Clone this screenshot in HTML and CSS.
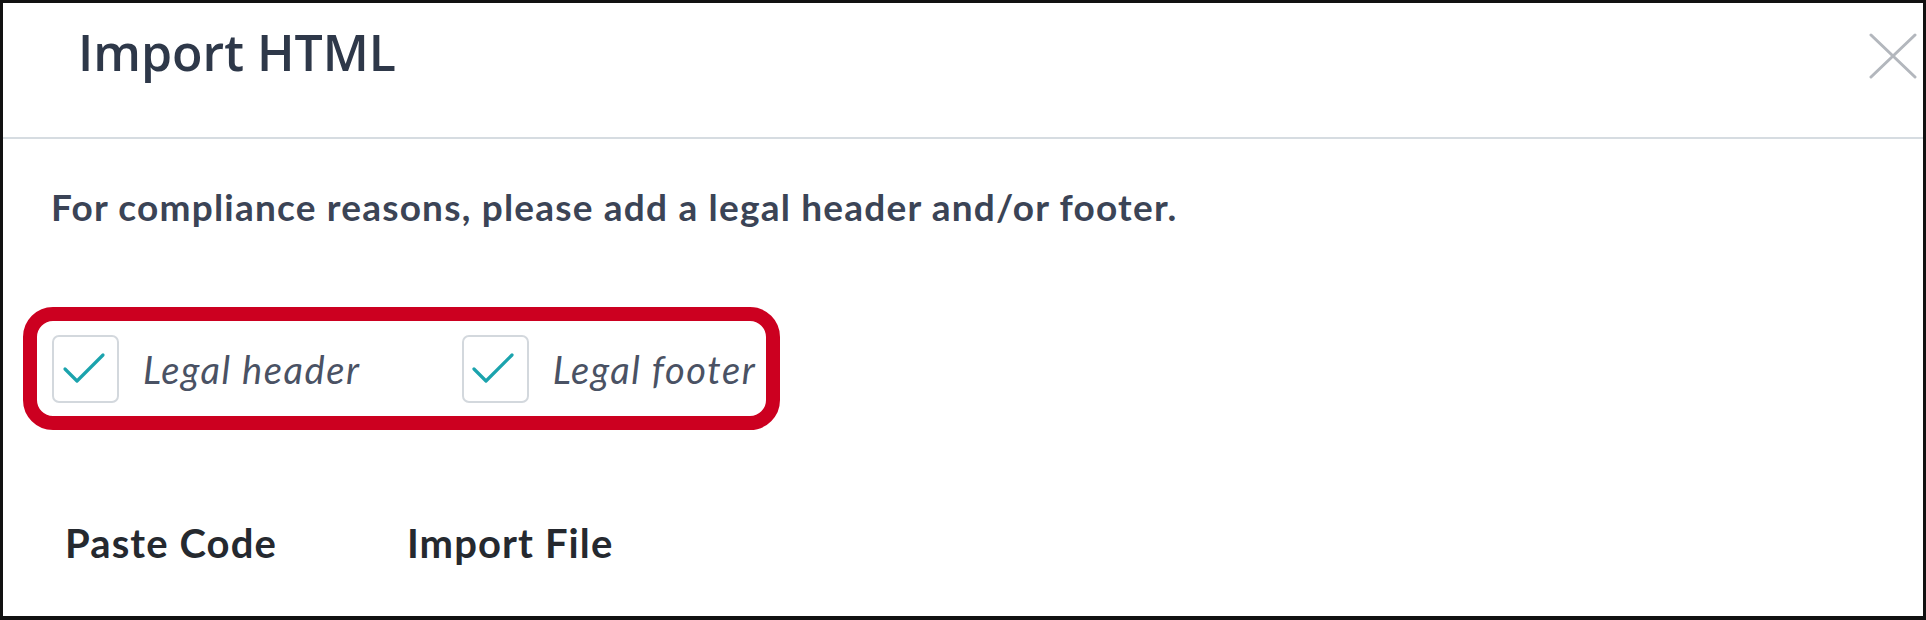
FILE: index.html
```html
<!DOCTYPE html>
<html lang="en">
<head>
<meta charset="utf-8">
<title>Import HTML</title>
<link rel="stylesheet" href="styles.css">
</head>
<body>
<div class="modal">
  <header class="modal-header">
    <h1 class="modal-title">Import HTML</h1>
    <button class="close-btn" type="button" aria-label="Close">
      <svg width="48" height="46" viewBox="0 0 48 46"><path d="M2 2 L46 44 M46 2 L2 44" stroke="#b3b7bd" stroke-width="3" stroke-linecap="round" fill="none"/></svg>
    </button>
  </header>
  <div class="modal-body">
    <p class="notice">For compliance reasons, please add a legal header and/or footer.</p>
    <div class="legal-options">
      <label class="check">
        <span class="check-box"><svg width="44" height="34" viewBox="0 0 44 34"><path d="M3 17 L15 29 L41 3" stroke="#1ba3ad" stroke-width="3.2" stroke-linecap="round" stroke-linejoin="round" fill="none"/></svg></span>
        <span class="check-label">Legal header</span>
      </label>
      <label class="check">
        <span class="check-box"><svg width="44" height="34" viewBox="0 0 44 34"><path d="M3 17 L15 29 L41 3" stroke="#1ba3ad" stroke-width="3.2" stroke-linecap="round" stroke-linejoin="round" fill="none"/></svg></span>
        <span class="check-label">Legal footer</span>
      </label>
    </div>
    <nav class="tabs">
      <span class="tab">Paste Code</span>
      <span class="tab">Import File</span>
    </nav>
  </div>
</div>
</body>
</html>
```
FILE: styles.css
```css
* { box-sizing: border-box; }
html, body { margin: 0; padding: 0; background: #fff; }
.modal {
  width: 1926px;
  height: 620px;
  border: 3px solid #111;
  border-bottom-width: 4px;
  background: #fff;
  overflow: hidden;
  font-family: Lato, "Noto Sans", sans-serif;
}
.modal-header {
  height: 136px;
  border-bottom: 2px solid #d6dce1;
  display: flex;
  justify-content: space-between;
  align-items: flex-start;
  padding: 0 6px 0 75px;
}
.modal-title {
  margin: 24px 0 0;
  font-family: "Open Sans", sans-serif;
  font-weight: 600;
  font-size: 50px;
  line-height: 50px;
  color: #2e3849;
}
.close-btn {
  margin-top: 30px;
  padding: 0;
  border: 0;
  background: none;
  display: flex;
}
.modal-body {
  padding: 0 20px;
}
.notice {
  margin: 50px 0 0 28px;
  font-size: 37px;
  line-height: 36px;
  letter-spacing: 1.2px;
  font-weight: 700;
  color: #3b4456;
}
.legal-options {
  margin-top: 82px;
  width: 757px;
  height: 123px;
  border: 14px solid #cc0020;
  border-radius: 30px;
  display: flex;
  align-items: center;
  gap: 101px;
  padding: 0 0 0 15px;
}
.check {
  display: flex;
  align-items: center;
  gap: 24px;
}
.check-box {
  width: 67px;
  height: 68px;
  border: 2px solid #d3d8dd;
  border-radius: 7px;
  display: flex;
  align-items: center;
  justify-content: center;
  padding-right: 4px;
}
.check-label {
  font-style: italic;
  font-size: 38px;
  letter-spacing: 1.6px;
  color: #4a5264;
}
.tabs {
  margin: 93px 0 0 42px;
  display: flex;
  gap: 130px;
}
.tab {
  font-size: 40px;
  line-height: 40px;
  letter-spacing: 1.1px;
  font-weight: 700;
  color: #25292f;
}
```
